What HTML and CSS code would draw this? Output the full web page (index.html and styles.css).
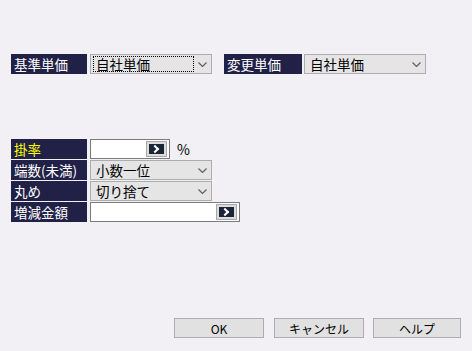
FILE: index.html
```html
<!DOCTYPE html>
<html lang="ja">
<head>
    <meta charset="UTF-8">
    <title>単価変更</title>
    <link rel="stylesheet" href="styles.css">
</head>
<body>
    <div class="page">
        <div class="top-row">
            <div class="label">基準単価</div>
            <div class="select focus"><span class="ring">自社単価</span><svg class="chev" width="9" height="5" viewBox="0 0 9 5"><path d="M0.5 0.5 L4.5 4.5 L8.5 0.5" fill="none" stroke="#606060" stroke-width="1.2"/></svg></div>
            <div class="label label-b">変更単価</div>
            <div class="select sel-b"><span>自社単価</span><svg class="chev" width="9" height="5" viewBox="0 0 9 5"><path d="M0.5 0.5 L4.5 4.5 L8.5 0.5" fill="none" stroke="#606060" stroke-width="1.2"/></svg></div>
        </div>

        <div class="form">
            <div class="row">
                <div class="label yellow">掛率</div>
                <div class="input narrow"><span class="go"><i></i></span></div>
                <span class="unit">%</span>
            </div>
            <div class="row">
                <div class="label">端数(未満)</div>
                <div class="select"><span>小数一位</span><svg class="chev" width="9" height="5" viewBox="0 0 9 5"><path d="M0.5 0.5 L4.5 4.5 L8.5 0.5" fill="none" stroke="#606060" stroke-width="1.2"/></svg></div>
            </div>
            <div class="row">
                <div class="label">丸め</div>
                <div class="select"><span>切り捨て</span><svg class="chev" width="9" height="5" viewBox="0 0 9 5"><path d="M0.5 0.5 L4.5 4.5 L8.5 0.5" fill="none" stroke="#606060" stroke-width="1.2"/></svg></div>
            </div>
            <div class="row">
                <div class="label">増減金額</div>
                <div class="input wide"><span class="go"><i></i></span></div>
            </div>
        </div>

        <div class="buttons">
            <button class="btn">OK</button>
            <button class="btn">キャンセル</button>
            <button class="btn btn-help">ヘルプ</button>
        </div>
    </div>
</body>
</html>
```

FILE: styles.css
```css
* {
    margin: 0;
    padding: 0;
    box-sizing: border-box;
    font-family: "Noto Sans CJK JP", "Noto Sans", sans-serif;
}

body {
    background: #f2f0f4;
    width: 472px;
    height: 351px;
    overflow: hidden;
    color: #000;
    font-size: 13.5px;
}

.page {
    padding: 54px 0 0 11px;
}

.top-row {
    display: flex;
    height: 20px;
}

.label {
    width: 76px;
    height: 20px;
    background: #212147;
    color: #fff;
    line-height: 20px;
    padding-left: 3px;
    white-space: nowrap;
}

.label.yellow {
    color: #ffff00;
}

.label-b {
    width: 78px;
    margin-left: 12px;
}

.select {
    position: relative;
    width: 122px;
    height: 20px;
    margin-left: 3px;
    background: #e5e5e5;
    border: 1px solid #adadad;
    line-height: 18px;
    padding-left: 5px;
}

.sel-b {
    margin-left: 2px;
}

.select .ring {
    display: block;
    width: 101px;
    height: 16px;
    margin: 1px 0 0 -3px;
    padding-left: 2px;
    line-height: 15px;
    border: 1px dotted #000;
}

.chev {
    position: absolute;
    right: 4px;
    top: 7px;
}

.form {
    margin-top: 65px;
    display: flex;
    flex-direction: column;
    gap: 1px;
}

.row {
    display: flex;
    align-items: center;
    height: 20px;
}

.input {
    display: flex;
    justify-content: flex-end;
    align-items: center;
    height: 20px;
    margin-left: 3px;
    background: #fff;
    border: 1px solid #7a7a7a;
    padding-right: 2px;
}

.input.narrow {
    width: 80px;
}

.input.wide {
    width: 150px;
}

.go {
    display: flex;
    align-items: center;
    justify-content: center;
    width: 21px;
    height: 16px;
    background: #dcdcdc;
    border: 1px solid #a8a8a8;
}

.go i {
    display: block;
    width: 15px;
    height: 10px;
    background: #1c2438;
    position: relative;
}

.go i::after {
    content: "";
    position: absolute;
    left: 3px;
    top: 2px;
    width: 4px;
    height: 4px;
    border-top: 2px solid #fff;
    border-right: 2px solid #fff;
    transform: rotate(45deg);
}

.unit {
    margin-left: 7px;
    font-size: 14px;
}

.buttons {
    display: flex;
    margin: 96px 0 0 163px;
    gap: 10px;
}

.btn {
    width: 90px;
    height: 20px;
    background: #e1e1e1;
    border: 1px solid #adadad;
    font-size: 12px;
    font-weight: 400;
    color: #000;
}

.btn-help {
    width: 88px;
    margin-left: -1px;
}
```
